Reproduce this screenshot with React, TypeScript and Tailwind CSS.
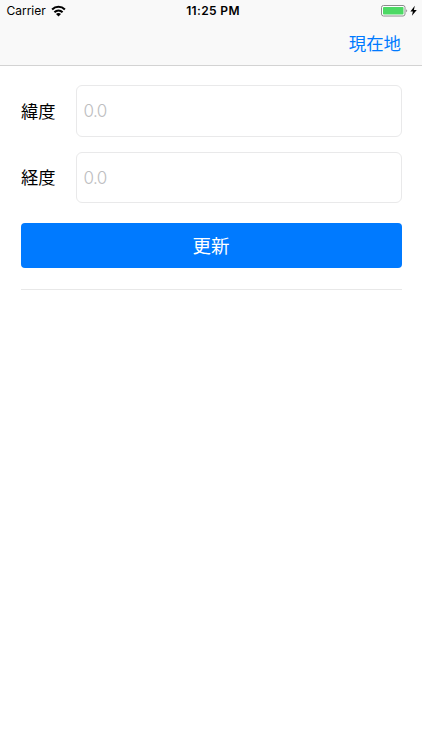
function StatusBar() {
  return (
    <div className="grid h-[22px] grid-cols-3 items-center text-[12px] leading-[22px] text-black">
      <div className="flex items-center gap-[5px] pl-[6.5px]">
        <span className="tracking-[-0.02px]">Carrier</span>
        <svg width="15" height="12" viewBox="0 0 15 12" fill="none" stroke="#000" strokeWidth="2.1">
          <path d="M1.1 4.4C4.7 0.9 10.3 0.9 13.9 4.4" />
          <path d="M3.4 7.2C5.8 5 9.2 5 11.6 7.2" />
          <path d="M7.5 11.4L5 8.9C6.5 7.8 8.5 7.8 10 8.9Z" fill="#000" stroke="none" />
        </svg>
      </div>
      <div className="pl-[4px] text-center font-semibold tracking-[0.35px] whitespace-nowrap">11:25 PM</div>
      <div className="flex justify-end pr-[4px]">
        <svg width="37" height="12" viewBox="0 0 37 12">
          <rect x="0.5" y="0.5" width="23.5" height="10.5" rx="2" fill="#fff" stroke="#8c8c8c" />
          <rect x="2" y="2" width="20.5" height="7.5" rx="0.8" fill="#4cd964" />
          <path d="M25.2 4.2Q27.2 5.7 25.2 7.3Z" fill="#8c8c8c" />
          <path d="M33.8 0.8L29.4 6.4H31.9L30.9 10.8L35.8 4.9H32.9Z" fill="#000" />
        </svg>
      </div>
    </div>
  );
}

function Field({ label }: { label: string }) {
  return (
    <label className="flex items-stretch">
      <span className="flex w-[55px] items-center pt-[1px] pl-[0.5px] text-[17.3px] leading-[26px] text-black">
        {label}
      </span>
      <input
        placeholder="0.0"
        className="min-w-0 flex-1 rounded-[6px] border border-[#e9e9ea] bg-white px-[7px] pt-[2px] text-[17px] font-light tracking-[-0.6px] outline-none placeholder:text-[#bdbdc0]"
      />
    </label>
  );
}

export default function App() {
  return (
    <div className="h-[750px] w-[422px] overflow-hidden bg-white font-['Inter','Noto_Sans_CJK_JP',sans-serif]">
      <header className="h-[66px] border-b border-[#d3d3d3] bg-[#f9f9f9]">
        <StatusBar />
        <div className="flex h-[43px] items-center justify-end pr-[21px]">
          <button className="text-[17.4px] leading-[26px] text-[#007aff]">現在地</button>
        </div>
      </header>
      <main className="flex flex-col px-[20.5px] pt-[19px]">
        <div className="grid grid-rows-[52px_51px] gap-[15px]">
          <Field label="緯度" />
          <Field label="経度" />
        </div>
        <button className="mt-[20px] h-[45px] rounded-[4px] bg-[#007aff] pt-[2px] text-[18.5px] font-normal text-white">
          更新
        </button>
        <div className="mt-[21px] h-[1px] bg-[#e8e8e8]" />
      </main>
    </div>
  );
}
